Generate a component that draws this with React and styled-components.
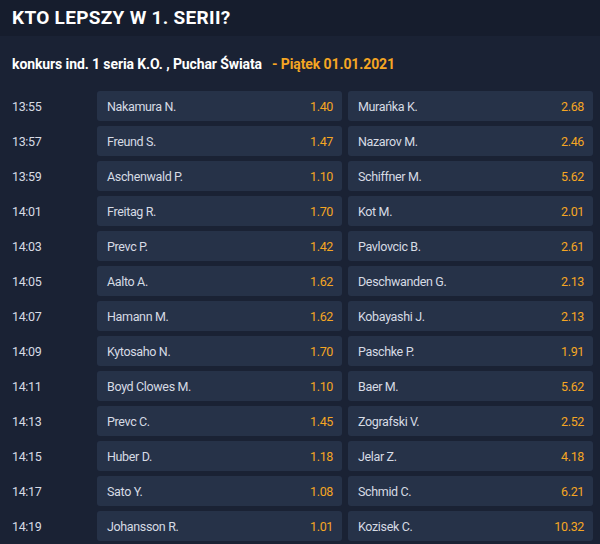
import styled, { createGlobalStyle } from "styled-components";

const rows = [
  ["13:55", "Nakamura N.", "1.40", "Murańka K.", "2.68"],
  ["13:57", "Freund S.", "1.47", "Nazarov M.", "2.46"],
  ["13:59", "Aschenwald P.", "1.10", "Schiffner M.", "5.62"],
  ["14:01", "Freitag R.", "1.70", "Kot M.", "2.01"],
  ["14:03", "Prevc P.", "1.42", "Pavlovcic B.", "2.61"],
  ["14:05", "Aalto A.", "1.62", "Deschwanden G.", "2.13"],
  ["14:07", "Hamann M.", "1.62", "Kobayashi J.", "2.13"],
  ["14:09", "Kytosaho N.", "1.70", "Paschke P.", "1.91"],
  ["14:11", "Boyd Clowes M.", "1.10", "Baer M.", "5.62"],
  ["14:13", "Prevc C.", "1.45", "Zografski V.", "2.52"],
  ["14:15", "Huber D.", "1.18", "Jelar Z.", "4.18"],
  ["14:17", "Sato Y.", "1.08", "Schmid C.", "6.21"],
  ["14:19", "Johansson R.", "1.01", "Kozisek C.", "10.32"],
];

const GlobalStyle = createGlobalStyle`
  body {
    margin: 0;
    background: #1a2234;
    font-family: Roboto, "Liberation Sans", sans-serif;
  }
`;

export default function App() {
  return (
    <Page>
      <GlobalStyle />
      <Header>KTO LEPSZY W 1. SERII?</Header>
      <Subtitle>
        konkurs ind. 1 seria K.O. , Puchar Świata
        <DateLabel>- Piątek 01.01.2021</DateLabel>
      </Subtitle>
      <Grid>
        {rows.map(([time, a, oa, b, ob]) => (
          <Row key={time}>
            <Time>{time}</Time>
            <Pick>
              <Name>{a}</Name>
              <Odds>{oa}</Odds>
            </Pick>
            <Pick>
              <Name>{b}</Name>
              <Odds>{ob}</Odds>
            </Pick>
          </Row>
        ))}
      </Grid>
    </Page>
  );
}

const Page = styled.div`
  width: 600px;
  height: 544px;
  background: #1a2234;
  overflow: hidden;
`;

const Header = styled.div`
  height: 36px;
  background: #161d2d;
  color: #ffffff;
  font-size: 19px;
  font-weight: 700;
  letter-spacing: 0.3px;
  line-height: 36px;
  padding-left: 12px;
  box-sizing: border-box;
`;

const Subtitle = styled.div`
  height: 55px;
  display: flex;
  align-items: center;
  padding-left: 12px;
  color: #ffffff;
  font-size: 14px;
  font-weight: 700;
  letter-spacing: -0.1px;
`;

const DateLabel = styled.span`
  color: #f5a623;
  margin-left: 10px;
`;

const Grid = styled.div`
  display: flex;
  flex-direction: column;
  gap: 5px;
  padding: 0 7px 0 12px;
`;

const Row = styled.div`
  display: grid;
  grid-template-columns: 79px 245px 245px;
  column-gap: 6px;
  height: 30px;
`;

const Time = styled.div`
  color: #d6dbe4;
  font-size: 12.5px;
  letter-spacing: -0.35px;
  display: flex;
  align-items: center;
`;

const Pick = styled.div`
  background: #263248;
  border-radius: 3px;
  display: flex;
  align-items: center;
  justify-content: space-between;
  padding: 0 9px 0 10px;
  font-size: 12.5px;
  letter-spacing: -0.35px;
`;

const Name = styled.span`
  color: #d6dbe4;
`;

const Odds = styled.span`
  color: #f5a623;
`;
